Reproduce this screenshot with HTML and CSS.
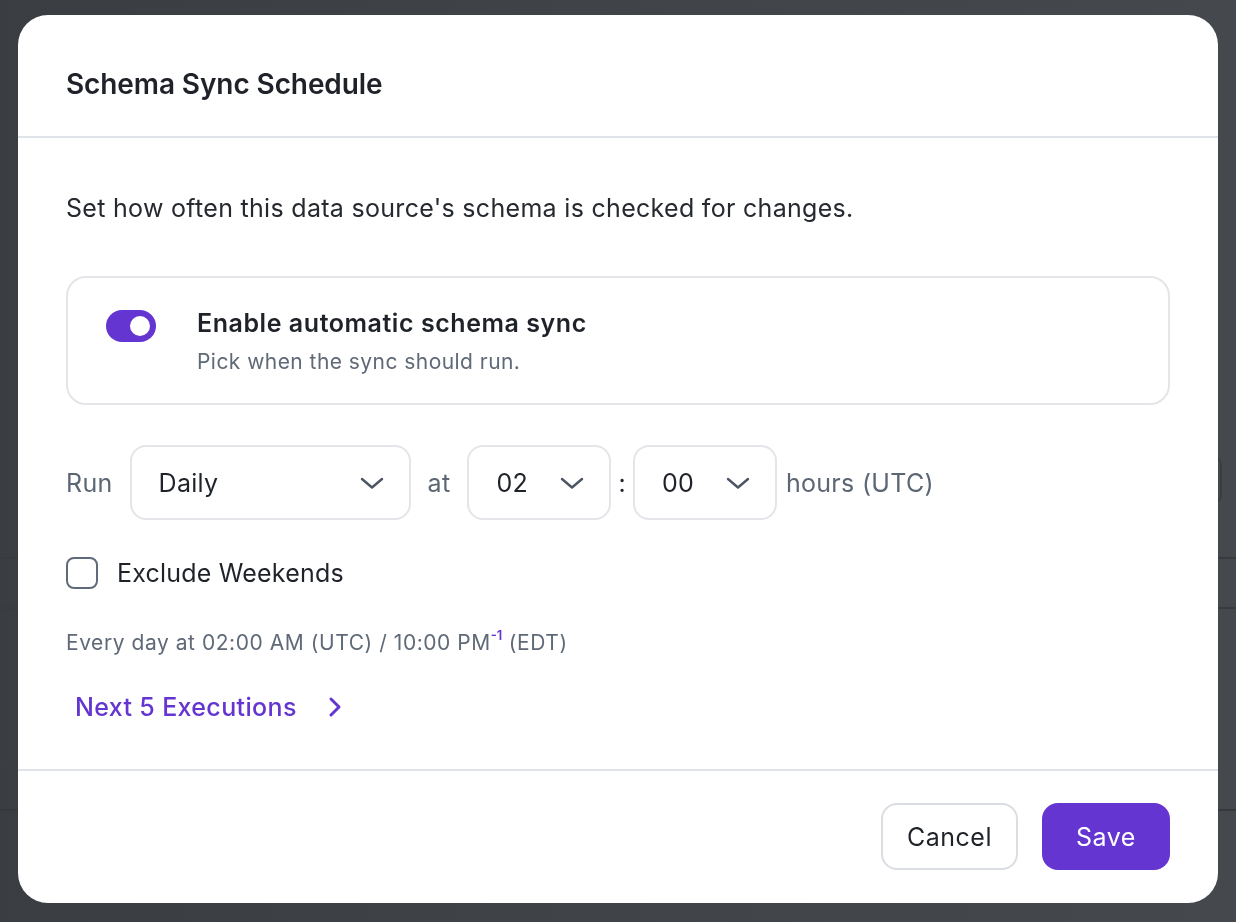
FILE: index.html
```html
<!DOCTYPE html>
<html lang="en">
  <head>
    <meta charset="UTF-8" />
    <meta name="viewport" content="width=device-width, initial-scale=1.0" />
    <title>Schema Sync Schedule</title>
    <link rel="stylesheet" href="styles.css">
  </head>
  <body>
    <!-- page behind the dialog, dimmed -->
    <div class="page">
      <div class="page-toolbar">
        <div class="page-search"></div>
      </div>
      <div class="page-table-head"></div>
      <div class="page-table-row"></div>
    </div>

    <div class="overlay">
      <div class="modal" role="dialog" aria-labelledby="modalTitle">
        <div class="modal-header">
          <h2 id="modalTitle">Schema Sync Schedule</h2>
        </div>

        <div class="modal-body">
          <p class="intro">Set how often this data source's schema is checked for changes.</p>

          <div class="sync-card">
            <span class="toggle is-on"><span class="toggle-knob"></span></span>
            <div class="sync-text">
              <div class="sync-title">Enable automatic schema sync</div>
              <div class="sync-sub">Pick when the sync should run.</div>
            </div>
          </div>

          <div class="run-row">
            <span class="muted">Run</span>
            <div class="select select-freq">
              <span>Daily</span>
              <svg class="chevron" viewBox="0 0 24 24"><path d="M2 8l10 8.5L22 8" /></svg>
            </div>
            <span class="muted">at</span>
            <div class="time-group">
              <div class="select select-num">
                <span>02</span>
                <svg class="chevron" viewBox="0 0 24 24"><path d="M2 8l10 8.5L22 8" /></svg>
              </div>
              <span class="colon">:</span>
              <div class="select select-num">
                <span>00</span>
                <svg class="chevron" viewBox="0 0 24 24"><path d="M2 8l10 8.5L22 8" /></svg>
              </div>
              <span class="muted unit">hours (UTC)</span>
            </div>
          </div>

          <label class="check">
            <span class="check-box"></span>
            Exclude Weekends
          </label>

          <p class="summary">Every day at 02:00 AM (UTC) / 10:00 PM<sup class="day-offset">-1</sup> (EDT)</p>

          <a class="next-link" href="#">
            Next 5 Executions
            <svg class="chevron-right" viewBox="0 0 24 24"><path d="M8 4l8 8-8 8" /></svg>
          </a>
        </div>

        <div class="modal-footer">
          <button class="btn btn-secondary" type="button">Cancel</button>
          <button class="btn btn-primary" type="button">Save</button>
        </div>
      </div>
    </div>
  </body>
</html>
```

FILE: styles.css
```css
* {
  box-sizing: border-box;
}

html,
body {
  height: 100%;
}

body {
  margin: 0;
  font-family: Inter, "Noto Sans", Arial, sans-serif;
  color: #1f2329;
  overflow: hidden;
}

/* Dimmed page underneath */
.page {
  height: 100%;
  background: linear-gradient(90deg, #3a3d42 0%, #404348 50%, #45484d 100%);
  padding-top: 455px;
}

.page-toolbar {
  display: flex;
  justify-content: flex-end;
  padding-right: 14px;
}

.page-search {
  width: 120px;
  height: 50px;
  border: 2px solid #3a3d41;
  border-radius: 10px;
}

.page-table-head {
  margin-top: 52px;
  height: 52px;
  border-top: 2px solid #393b3f;
  border-bottom: 2px solid #393b3f;
}

.page-table-row {
  height: 202px;
  border-bottom: 2px solid #36383c;
}

/* Dialog */
.overlay {
  position: fixed;
  inset: 0;
  padding: 15px 18px;
}

.modal {
  background-color: #fff;
  border-radius: 30px;
  overflow: hidden;
}

.modal-header {
  height: 123px;
  padding: 52px 48px 0;
  border-bottom: 2px solid #e0e3e7;
}

.modal-header h2 {
  margin: 0;
  font-size: 28px;
  line-height: 34px;
  font-weight: 600;
  letter-spacing: -0.1px;
  color: #1f2329;
}

.modal-body {
  padding: 54px 48px 46px;
}

.intro {
  margin: 0;
  font-size: 25px;
  line-height: 32px;
  letter-spacing: 0.3px;
  color: #262a30;
}

.sync-card {
  margin-top: 52px;
  display: flex;
  align-items: flex-start;
  gap: 41px;
  padding: 30px 38px 27px;
  border: 2px solid #e3e5e8;
  border-radius: 20px;
}

.toggle {
  flex: none;
  width: 50px;
  height: 32px;
  margin-top: 2px;
  border-radius: 16px;
  background-color: #6535d1;
  display: flex;
  align-items: center;
  justify-content: flex-end;
  padding-right: 6px;
}

.toggle-knob {
  width: 20px;
  height: 20px;
  border-radius: 50%;
  background-color: #fff;
}

.sync-title {
  font-size: 25px;
  line-height: 30px;
  font-weight: 600;
  letter-spacing: 0.55px;
  color: #1f2329;
}

.sync-sub {
  margin-top: 10px;
  font-size: 21px;
  line-height: 28px;
  letter-spacing: 0.45px;
  color: #5f6977;
}

.run-row {
  margin-top: 40px;
  display: flex;
  align-items: center;
  gap: 17px;
  font-size: 25px;
  letter-spacing: 0.3px;
}

.muted {
  color: #5c6674;
}

.select {
  height: 75px;
  display: flex;
  align-items: center;
  justify-content: space-between;
  border: 2px solid #e3e5e9;
  border-radius: 16px;
  color: #1f2329;
}

.select-freq {
  width: 281px;
  padding: 0 25px 0 27px;
}

.select-num {
  width: 144px;
  padding: 0 25px 0 27px;
}

.chevron {
  width: 24px;
  height: 24px;
  fill: none;
  stroke: #4b5563;
  stroke-width: 2.4;
  stroke-linecap: round;
  stroke-linejoin: round;
}

.time-group {
  display: flex;
  align-items: center;
  gap: 7px;
}

.colon {
  color: #1f2329;
}

.unit {
  margin-left: 2px;
}

.check {
  margin-top: 37px;
  display: flex;
  align-items: center;
  gap: 19px;
  font-size: 25px;
  line-height: 32px;
  letter-spacing: 0.2px;
  color: #1f2329;
}

.check-box {
  width: 32px;
  height: 32px;
  border: 2.5px solid #5f6b7a;
  border-radius: 8px;
}

.summary {
  margin: 40px 0 0;
  font-size: 21px;
  line-height: 28px;
  letter-spacing: 0.55px;
  color: #5f6977;
}

.day-offset {
  font-size: 13px;
  color: #6535d1;
  font-weight: 600;
  letter-spacing: 0;
  vertical-align: 10px;
  line-height: 0;
}

.next-link {
  margin-top: 34px;
  margin-left: 9px;
  display: flex;
  align-items: center;
  gap: 26px;
  width: max-content;
  font-size: 25px;
  line-height: 32px;
  font-weight: 500;
  letter-spacing: 0.35px;
  color: #6535d1;
  text-decoration: none;
}

.chevron-right {
  width: 24px;
  height: 24px;
  fill: none;
  stroke: #6535d1;
  stroke-width: 3;
  stroke-linecap: round;
  stroke-linejoin: round;
}

.modal-footer {
  display: flex;
  justify-content: flex-end;
  gap: 24px;
  padding: 32px 48px 33px;
  border-top: 2px solid #e0e3e7;
}

.btn {
  height: 67px;
  border-radius: 16px;
  font-family: inherit;
  font-size: 25px;
  letter-spacing: 0.5px;
  cursor: pointer;
}

.btn-secondary {
  width: 137px;
  background-color: #fff;
  border: 2px solid #dadde2;
  color: #1f2329;
}

.btn-primary {
  width: 128px;
  background-color: #6535d1;
  border: none;
  color: #fff;
}
```
